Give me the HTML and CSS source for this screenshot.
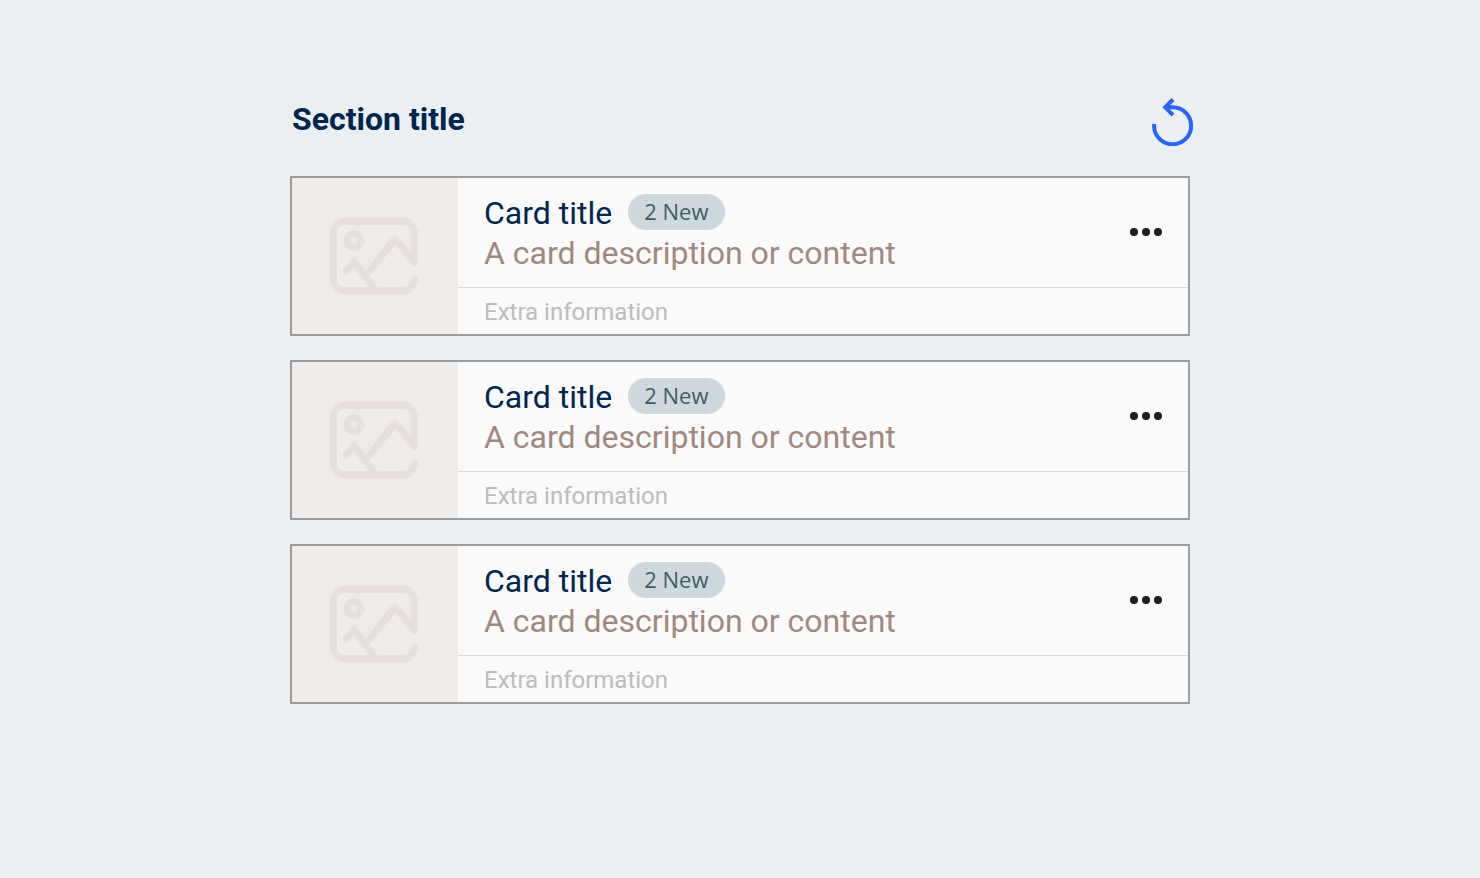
FILE: index.html
```html
<!DOCTYPE html>
<html lang="en">
<head>
<meta charset="utf-8">
<meta name="viewport" content="width=device-width, initial-scale=1">
<title>Section title</title>
<link rel="stylesheet" href="styles.css">
</head>
<body>
<svg class="sprite" aria-hidden="true">
  <symbol id="image" viewBox="0 0 88 76">
    <path d="M84.500 44.500V14.500a11 11 0 0 0-11-11h-59a11 11 0 0 0-11 11v47a11 11 0 0 0 11 11h59a11 11 0 0 0 11-11M84.500 44.500L65 21 36 58M16 53.500l8-10L46 72.500"/>
    <circle cx="24" cy="22.500" r="7"/>
  </symbol>
  <symbol id="dots" viewBox="0 0 32 8">
    <circle cx="4" cy="4" r="4"/><circle cx="16" cy="4" r="4"/><circle cx="28" cy="4" r="4"/>
  </symbol>
</svg>
<main class="section">
  <header class="section-header">
    <h1 class="section-title">Section title</h1>
    <button class="icon-button" type="button" aria-label="Refresh">
      <svg class="refresh-icon" viewBox="0 0 42 48" aria-hidden="true"><path d="M2.200 26A18.500 18.500 0 1 0 20.700 9.300H13M21 1.500L13.200 9.300 21 17.200"/></svg>
    </button>
  </header>
  <div class="card-list">
    <article class="card">
      <div class="card-media"><svg class="image-icon" aria-hidden="true"><use href="#image"/></svg></div>
      <div class="card-body">
        <div class="card-main">
          <div class="card-text">
            <div class="card-heading"><h2 class="card-title">Card title</h2><span class="badge">2 New</span></div>
            <p class="card-description">A card description or content</p>
          </div>
          <button class="icon-button menu-button" type="button" aria-label="More options"><svg class="dots-icon" aria-hidden="true"><use href="#dots"/></svg></button>
        </div>
        <p class="card-extra">Extra information</p>
      </div>
    </article>
    <article class="card">
      <div class="card-media"><svg class="image-icon" aria-hidden="true"><use href="#image"/></svg></div>
      <div class="card-body">
        <div class="card-main">
          <div class="card-text">
            <div class="card-heading"><h2 class="card-title">Card title</h2><span class="badge">2 New</span></div>
            <p class="card-description">A card description or content</p>
          </div>
          <button class="icon-button menu-button" type="button" aria-label="More options"><svg class="dots-icon" aria-hidden="true"><use href="#dots"/></svg></button>
        </div>
        <p class="card-extra">Extra information</p>
      </div>
    </article>
    <article class="card">
      <div class="card-media"><svg class="image-icon" aria-hidden="true"><use href="#image"/></svg></div>
      <div class="card-body">
        <div class="card-main">
          <div class="card-text">
            <div class="card-heading"><h2 class="card-title">Card title</h2><span class="badge">2 New</span></div>
            <p class="card-description">A card description or content</p>
          </div>
          <button class="icon-button menu-button" type="button" aria-label="More options"><svg class="dots-icon" aria-hidden="true"><use href="#dots"/></svg></button>
        </div>
        <p class="card-extra">Extra information</p>
      </div>
    </article>
  </div>
</main>
</body>
</html>
```
FILE: styles.css
```css
* {
  box-sizing: border-box;
}

body {
  margin: 0;
  background: #ebeff2;
  font-family: Roboto, "Liberation Sans", sans-serif;
}

h1, h2, p {
  margin: 0;
  font-weight: 400;
}

.sprite {
  display: none;
}

.section {
  max-width: 948px;
  margin: 0 auto;
  padding: 98px 24px;
}

.section-header {
  display: flex;
  justify-content: space-between;
  align-items: flex-start;
  margin: 0 -4px 30px 2px;
}

.section .section-title {
  font-size: 32px;
  line-height: 42px;
  font-weight: 700;
  color: #00264d;
}

.icon-button {
  display: flex;
  padding: 0;
  border: 0;
  background: none;
  cursor: pointer;
}

.menu-button {
  padding: 34px 0;
}

.refresh-icon {
  width: 42px;
  height: 48px;
  fill: none;
  stroke: #2962ff;
  stroke-width: 4;
}

.card-list {
  display: flex;
  flex-direction: column;
  gap: 24px;
}

.card {
  display: flex;
  border: 2px solid #9e9e9e;
  background: #fafafa;
}

.card-media {
  display: flex;
  flex: 0 0 166px;
  align-items: center;
  justify-content: center;
  padding-right: 2px;
  background: #efebe8;
}

.image-icon {
  width: 88px;
  height: 76px;
  fill: none;
  stroke: #e6dfdd;
  stroke-width: 7;
  stroke-linecap: round;
  stroke-linejoin: round;
}

.card-body {
  flex: 1;
  min-width: 0;
}

.card-main {
  display: flex;
  align-items: flex-start;
  justify-content: space-between;
  padding: 16px 26px 14px;
  border-bottom: 1px solid #d9dadb;
}

.card-heading {
  display: flex;
  align-items: flex-start;
  gap: 16px;
}

.card-title {
  font-size: 32px;
  line-height: 39px;
  color: #00264d;
}

.badge {
  height: 36px;
  padding: 0 16px;
  border-radius: 18px;
  background: #cfd8dc;
  color: #455a64;
  font-family: "Open Sans", "Noto Sans", sans-serif;
  font-size: 22px;
  line-height: 34px;
}

.card-description {
  font-size: 32px;
  line-height: 40px;
  color: #a1887f;
}

.dots-icon {
  width: 32px;
  height: 8px;
  fill: #212121;
}

.card-extra {
  padding: 2px 26px 0;
  font-size: 24px;
  line-height: 44px;
  color: #bdbdbd;
}
```
